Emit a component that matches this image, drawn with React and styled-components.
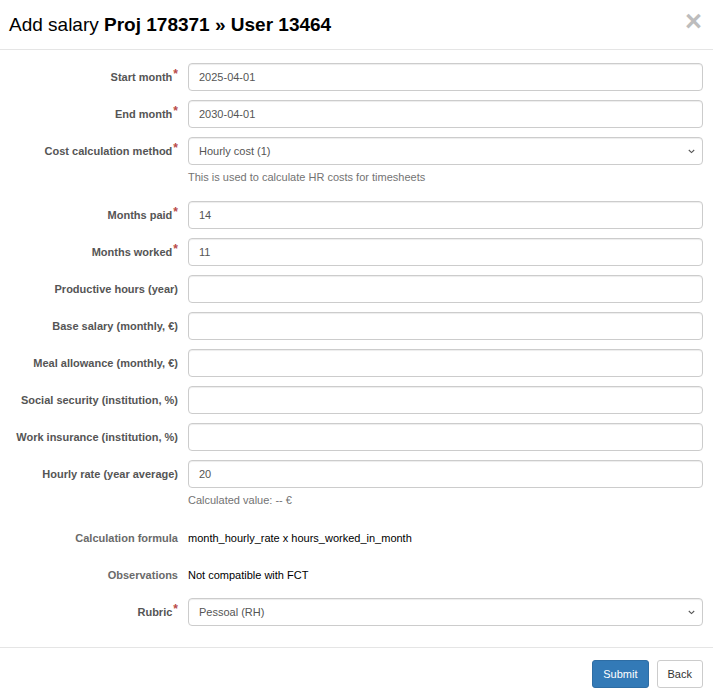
import React from 'react';
import styled, { createGlobalStyle } from 'styled-components';

const GlobalStyle = createGlobalStyle`
  html, body {
    margin: 0;
    padding: 0;
    background: #fff;
  }
  body {
    font-family: "Liberation Sans", Arial, sans-serif;
    font-size: 11px;
    color: #333;
  }
  * {
    box-sizing: border-box;
  }
`;

const Modal = styled.div`
  width: 713px;
  min-height: 696px;
  background: #fff;
`;

const Header = styled.div`
  height: 50px;
  padding: 0 11px 0 9px;
  border-bottom: 1px solid #e5e5e5;
  display: flex;
  align-items: center;
  justify-content: space-between;
`;

const Title = styled.h4`
  margin: 0;
  font-size: 19px;
  font-weight: normal;
  color: #000;
  line-height: 20px;
  b {
    font-weight: bold;
  }
`;

const Close = styled.button`
  border: 0;
  background: none;
  padding: 0;
  margin: -6px 0 0 0;
  font-family: "Liberation Sans", Arial, sans-serif;
  font-size: 29px;
  font-weight: bold;
  line-height: 1;
  color: #bdbdbd;
  cursor: pointer;
`;

const Body = styled.form`
  padding: 13px 10px 12px 10px;
  border-bottom: 1px solid #e5e5e5;
`;

const Row = styled.div`
  display: grid;
  grid-template-columns: 168px 1fr;
  column-gap: 10px;
  margin-bottom: 9px;
`;

const Label = styled.label`
  text-align: right;
  font-weight: bold;
  color: ${(p) => (p.$plain ? '#6a6a6a' : '#555')};
  line-height: 28px;
  white-space: nowrap;
`;

const Req = styled.span`
  color: #b94a48;
  font-size: 12px;
  position: relative;
  top: -3px;
  margin-left: 1px;
`;

const Field = styled.div`
  display: flex;
  flex-direction: column;
`;

const Input = styled.input`
  width: 100%;
  height: 28px;
  padding: 0 10px;
  font-family: inherit;
  font-size: 11px;
  color: #555;
  border: 1px solid #ccc;
  border-radius: 4px;
  box-shadow: inset 0 1px 1px rgba(0, 0, 0, 0.075);
  outline: none;
`;

const SelectWrap = styled.div`
  position: relative;
  svg {
    position: absolute;
    right: 8px;
    top: 12px;
    pointer-events: none;
  }
`;

const Select = styled.select`
  width: 100%;
  height: 28px;
  padding: 0 10px;
  font-family: inherit;
  font-size: 11px;
  color: #555;
  background: #fff;
  border: 1px solid #ccc;
  border-radius: 4px;
  box-shadow: inset 0 1px 1px rgba(0, 0, 0, 0.075);
  outline: none;
  appearance: none;
`;

const Help = styled.p`
  margin: 5px 0 0;
  line-height: 14px;
  height: 22px;
  color: #737373;
`;

const Static = styled.div`
  line-height: 28px;
  color: #000;
`;

const Footer = styled.div`
  padding: 12px 10px;
  display: flex;
  justify-content: flex-end;
  gap: 8px;
`;

const Button = styled.button`
  height: 28px;
  padding: 0 10px;
  font-family: inherit;
  font-size: 11px;
  border-radius: 3px;
  border: 1px solid ${(p) => (p.$primary ? '#2e6da4' : '#ccc')};
  background: ${(p) => (p.$primary ? '#337ab7' : '#fff')};
  color: ${(p) => (p.$primary ? '#fff' : '#333')};
  cursor: pointer;
`;

const Chevron = () => (
  <svg width="7" height="5" viewBox="0 0 7 5">
    <path d="M0.8 1 L3.5 3.6 L6.2 1" fill="none" stroke="#555" strokeWidth="1.1" />
  </svg>
);

const fields = [
  { label: 'Start month', req: true, value: '2025-04-01' },
  { label: 'End month', req: true, value: '2030-04-01' },
  {
    label: 'Cost calculation method',
    req: true,
    select: 'Hourly cost (1)',
    help: 'This is used to calculate HR costs for timesheets',
  },
  { label: 'Months paid', req: true, value: '14' },
  { label: 'Months worked', req: true, value: '11' },
  { label: 'Productive hours (year)', value: '' },
  { label: 'Base salary (monthly, €)', value: '' },
  { label: 'Meal allowance (monthly, €)', value: '' },
  { label: 'Social security (institution, %)', value: '' },
  { label: 'Work insurance (institution, %)', value: '' },
  { label: 'Hourly rate (year average)', value: '20', help: 'Calculated value: -- €' },
  { label: 'Calculation formula', text: 'month_hourly_rate x hours_worked_in_month' },
  { label: 'Observations', text: 'Not compatible with FCT' },
  { label: 'Rubric', req: true, select: 'Pessoal (RH)' },
];

export default function App() {
  return (
    <>
      <GlobalStyle />
      <Modal>
        <Header>
          <Title>
            Add salary <b>Proj 178371 » User 13464</b>
          </Title>
          <Close type="button">×</Close>
        </Header>
        <Body onSubmit={(e) => e.preventDefault()}>
          {fields.map((f) => (
            <Row key={f.label}>
              <Label $plain={!!f.text}>
                {f.label}
                {f.req && <Req>*</Req>}
              </Label>
              <Field>
                {f.text ? (
                  <Static>{f.text}</Static>
                ) : f.select ? (
                  <SelectWrap>
                    <Select defaultValue={f.select}>
                      <option>{f.select}</option>
                    </Select>
                    <Chevron />
                  </SelectWrap>
                ) : (
                  <Input defaultValue={f.value} />
                )}
                {f.help && <Help>{f.help}</Help>}
              </Field>
            </Row>
          ))}
        </Body>
        <Footer>
          <Button $primary type="button">Submit</Button>
          <Button type="button">Back</Button>
        </Footer>
      </Modal>
    </>
  );
}
